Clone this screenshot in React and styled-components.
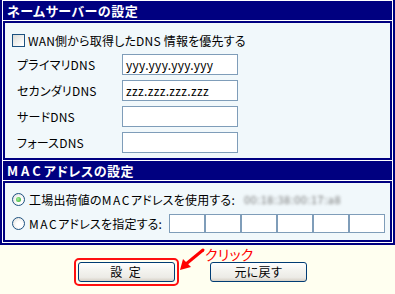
import React from 'react';
import styled, { createGlobalStyle } from 'styled-components';

const GlobalStyle = createGlobalStyle`
  html, body {
    margin: 0;
    padding: 0;
    background: #fffff0;
  }
  body {
    font-family: "Noto Sans CJK JP", "Noto Sans", sans-serif;
    font-size: 12px;
    color: #000;
    font-feature-settings: "palt";
    letter-spacing: 0.2px;
  }
`;

const NAVY = '#000080';

const Panel = styled.div`
  width: 389px;
  border: 2px solid ${NAVY};
  border-top: 0;
  background: #fff;
  padding: 1px;
  display: flex;
  flex-direction: column;
  gap: 1px;
`;

const SectionHeader = styled.div`
  height: 19px;
  background: ${NAVY};
  color: #fff;
  font-weight: bold;
  font-size: 13px;
  line-height: 19px;
  padding-left: 4px;
  letter-spacing: 0.5px;
`;

const Latin = styled.span`
  letter-spacing: ${(p) => p.$ls}px;
`;

const SectionBody = styled.div`
  border: 2px solid ${NAVY};
  background: #f1f8fb;
  height: ${(p) => p.$h}px;
  box-sizing: border-box;
  padding: ${(p) => p.$pad};
  display: flex;
  flex-direction: column;
  gap: ${(p) => p.$gap}px;
`;

const CheckRow = styled.label`
  display: flex;
  align-items: center;
  height: 20px;
  padding-left: 7px;
  gap: 3px;
  margin-bottom: -1px;
`;

const CheckBox = styled.span`
  width: 11px;
  height: 11px;
  border: 1px solid #1c5180;
  background: linear-gradient(135deg, #dcdcd7 0%, #fff 90%);
`;

const FieldRow = styled.div`
  display: flex;
  align-items: center;
  height: 21px;
  padding-left: 12px;
`;

const FieldLabel = styled.span`
  width: 105px;
`;

const TextBox = styled.div`
  width: ${(p) => p.$w}px;
  height: ${(p) => p.$h}px;
  box-sizing: border-box;
  border: 1px solid #7f9db9;
  background: #fff;
  padding-left: 3px;
  font-size: 12px;
  line-height: ${(p) => p.$h - 2}px;
  letter-spacing: 0.3px;
`;

const RadioRow = styled.label`
  display: flex;
  align-items: center;
  height: ${(p) => p.$h}px;
  padding-left: 7px;
  gap: 4px;
`;

const Radio = styled.span`
  width: 11px;
  height: 11px;
  border: 1px solid #1c5180;
  border-radius: 50%;
  background: radial-gradient(circle at 60% 60%, #fff 30%, #dcdcd7 100%);
  display: flex;
  align-items: center;
  justify-content: center;
  &::after {
    content: '';
    width: 5px;
    height: 5px;
    border-radius: 50%;
    background: ${(p) => (p.$on ? 'radial-gradient(circle at 40% 40%, #a6f19c, #21a121)' : 'transparent')};
  }
`;

const Blurred = styled.span`
  margin-left: 5px;
  color: #7a7a7a;
  font-size: 11px;
  filter: blur(1.4px);
  letter-spacing: 0.5px;
`;

const MacBoxes = styled.div`
  display: flex;
  margin-left: 3px;
`;

const ButtonArea = styled.div`
  position: relative;
  display: flex;
  align-items: center;
  gap: 31px;
  padding: 13px 0 0 74px;
`;

const Highlight = styled.span`
  display: inline-flex;
  border: 2px solid #ff1010;
  border-radius: 5px;
  padding: 2px;
`;

const Button = styled.button`
  width: 97px;
  height: 20px;
  padding: 0;
  border: 1px solid #003c74;
  border-radius: 3px;
  background: linear-gradient(#ffffff 0%, #f4f4f0 40%, #ecebe6 80%, #d6d0c5 100%);
  font-family: inherit;
  font-size: 12px;
  color: #000;
  line-height: 18px;
  letter-spacing: ${(p) => p.$spacing || 0}px;
`;

const Note = styled.span`
  position: absolute;
  left: 205px;
  top: 0px;
  color: #ff0000;
  font-size: 14px;
  line-height: 18px;
`;

const Arrow = styled.svg`
  position: absolute;
  left: 178px;
  top: 2px;
`;

export default function App() {
  const dnsRows = [
    ['プライマリDNS', 'yyy.yyy.yyy.yyy'],
    ['セカンダリDNS', 'zzz.zzz.zzz.zzz'],
    ['サードDNS', ''],
    ['フォースDNS', ''],
  ];
  return (
    <>
      <GlobalStyle />
      <Panel>
        <SectionHeader>ネームサーバーの設定</SectionHeader>
        <SectionBody $h={139} $pad="7px 0 0 0" $gap={5}>
          <CheckRow>
            <CheckBox />
            <span>WAN側から取得したDNS 情報を優先する</span>
          </CheckRow>
          {dnsRows.map(([label, value]) => (
            <FieldRow key={label}>
              <FieldLabel>{label}</FieldLabel>
              <TextBox $w={116} $h={21}>{value}</TextBox>
            </FieldRow>
          ))}
        </SectionBody>
        <SectionHeader>
          <Latin $ls={3}>MAC</Latin>アドレスの設定
        </SectionHeader>
        <SectionBody $h={61} $pad="5px 0 0 0" $gap={0}>
          <RadioRow $h={22}>
            <Radio $on />
            <span>
              工場出荷値の<Latin $ls={1.5}>MAC</Latin>アドレスを使用する:
            </span>
            <Blurred>00:18:38:00:17:a8</Blurred>
          </RadioRow>
          <RadioRow $h={26}>
            <Radio />
            <span>
              <Latin $ls={1.5}>MAC</Latin>アドレスを指定する:
            </span>
            <MacBoxes>
              {[0, 1, 2, 3, 4, 5].map((i) => (
                <TextBox key={i} $w={36} $h={19} />
              ))}
            </MacBoxes>
          </RadioRow>
        </SectionBody>
      </Panel>
      <ButtonArea>
        <Highlight>
          <Button $spacing={2}>設 定</Button>
        </Highlight>
        <Button>元に戻す</Button>
        <Note>クリック</Note>
        <Arrow width="28" height="26" viewBox="0 0 28 26">
          <line x1="25" y1="3" x2="8" y2="17" stroke="#ff0000" strokeWidth="3" strokeLinecap="round" />
          <polygon points="2,23 5,12 13,20" fill="#ff0000" />
        </Arrow>
      </ButtonArea>
    </>
  );
}
